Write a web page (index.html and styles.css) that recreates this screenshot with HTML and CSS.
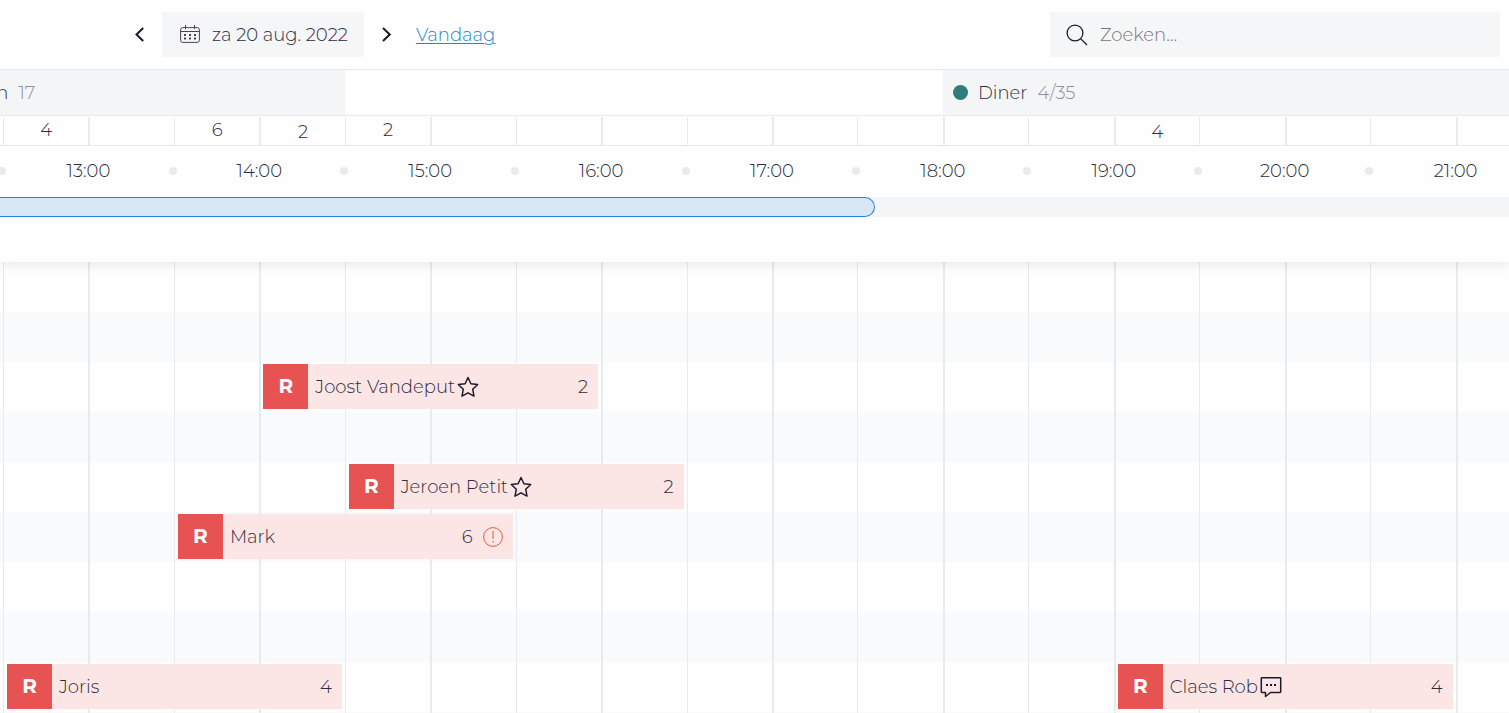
FILE: index.html
```html
<!DOCTYPE html>
<html lang="nl">
<head>
<meta charset="utf-8">
<title>Reservaties</title>
<meta name="viewport" content="width=device-width, initial-scale=1">
<link rel="stylesheet" href="styles.css">
</head>
<body>
<header class="header">
  <div class="topbar">
    <nav class="date-nav">
      <button class="arrow" type="button" aria-label="Vorige dag"><svg width="10" height="16" viewBox="0 0 10 16"><path d="M8.200 1 1.500 7.500l6.700 6.500"/></svg></button>
      <button class="date" type="button">
        <svg class="calendar" width="20" height="20" viewBox="0 0 20 20"><rect x=".6" y="2.600" width="18.800" height="14.800" rx="2.200"/><path d="M1 6.500h18M5.500 0v4M14.500 0v4"/><path class="days" d="M4 10h2M9 10h2M14 10h2M4 13.500h2M9 13.500h2M14 13.500h2"/></svg>
        <span class="label">za 20 aug. 2022</span>
      </button>
      <button class="arrow" type="button" aria-label="Volgende dag"><svg width="10" height="16" viewBox="0 0 10 16"><path d="M2 1l6.700 6.500L2 14"/></svg></button>
      <a class="today label" href="#">Vandaag</a>
    </nav>
    <label class="search">
      <svg width="22" height="22" viewBox="0 0 22 22"><circle cx="9" cy="9" r="7.900"/><path d="m14.600 14.600 6.400 6.400"/></svg>
      <input class="label" type="search" placeholder="Zoeken..." aria-label="Zoeken">
    </label>
  </div>

  <div class="strip sections">
    <div class="timeline">
      <div class="section lunch"><span class="label">Lunch</span><span class="label total">17</span></div>
      <div class="section diner"><i class="dot"></i><span class="label">Diner</span><span class="label total">4/35</span></div>
    </div>
  </div>

  <div class="strip counts">
    <div class="timeline ticks">
      <span>4</span><span></span><span>6</span><span>2</span><span>2</span><span></span><span></span><span></span><span></span><span></span><span></span><span></span><span></span><span>4</span><span></span><span></span><span></span><span></span>
    </div>
  </div>

  <div class="strip hours">
    <div class="timeline">
      <div class="hour"><i></i><span>13:00</span></div>
      <div class="hour"><i></i><span>14:00</span></div>
      <div class="hour"><i></i><span>15:00</span></div>
      <div class="hour"><i></i><span>16:00</span></div>
      <div class="hour"><i></i><span>17:00</span></div>
      <div class="hour"><i></i><span>18:00</span></div>
      <div class="hour"><i></i><span>19:00</span></div>
      <div class="hour"><i></i><span>20:00</span></div>
      <div class="hour"><i></i><span>21:00</span></div>
    </div>
  </div>

  <div class="track"><div class="elapsed"></div></div>
</header>

<main class="board">
  <div class="timeline ticks">
    <span></span><span></span><span></span><span></span><span></span><span></span><span></span><span></span><span></span><span></span><span></span><span></span><span></span><span></span><span></span><span></span><span></span><span></span>
  </div>
  <div class="lanes">
    <div class="timeline"></div>
    <div class="timeline"></div>
    <div class="timeline">
      <article class="booking at-1400"><b>R</b><span class="label">Joost Vandeput</span>
        <svg class="icon" width="22" height="22" viewBox="0 0 22 22"><path d="m11 1.500 2.900 6.200 6.800.8-5 4.700 1.300 6.900-6-3.300-6 3.300 1.300-6.900-5-4.700 6.800-.8z"/></svg>
        <span class="label guests">2</span></article>
    </div>
    <div class="timeline"></div>
    <div class="timeline">
      <article class="booking at-1430"><b>R</b><span class="label">Jeroen Petit</span>
        <svg class="icon" width="22" height="22" viewBox="0 0 22 22"><path d="m11 1.500 2.900 6.200 6.800.8-5 4.700 1.300 6.900-6-3.300-6 3.300 1.300-6.900-5-4.700 6.800-.8z"/></svg>
        <span class="label guests">2</span></article>
    </div>
    <div class="timeline">
      <article class="booking at-1330"><b>R</b><span class="label">Mark</span><span class="label guests">6</span>
        <svg class="alert" width="20" height="20" viewBox="0 0 20 20"><circle cx="10" cy="10" r="9.400"/><path d="M10 4v8M10 14v1.700"/></svg></article>
    </div>
    <div class="timeline"></div>
    <div class="timeline"></div>
    <div class="timeline">
      <article class="booking at-1230"><b>R</b><span class="label">Joris</span><span class="label guests">4</span></article>
      <article class="booking at-1900"><b>R</b><span class="label">Claes Rob</span>
        <svg class="icon" width="22" height="22" viewBox="0 0 22 22"><path d="M2 1.700h18q.7 0 .7.700v13.400q0 .7-.7.700h-9.500L5.500 20.500v-4H2q-.7 0-.7-.7V2.400q0-.7.700-.7z"/><path class="dots" d="M6 9h2M10 9h2M14 9h2"/></svg>
        <span class="label guests">4</span></article>
    </div>
  </div>
</main>
</body>
</html>
```
FILE: styles.css
```css
* { box-sizing: border-box; }

:root {
  --ink: #2b2d42;
  --line: #e8ebee;
  --panel: #f4f5f7;
  --paper: #fefefe;
  --blue: #2185d8;
}

body {
  margin: 0;
  min-height: 100vh;
  display: flex;
  flex-direction: column;
  overflow: hidden;
  background: var(--paper);
  color: var(--ink);
  font: 300 18px/24px Montserrat, Inter, sans-serif;
}

button, input { font: inherit; color: inherit; border: 0; background: none; padding: 0; }
button { cursor: pointer; }
svg { display: block; flex: none; fill: none; stroke: #1c1a2c; }
.label { padding: 1px 0 0; }

/* Header */
.header {
  position: relative;
  z-index: 1;
  padding-bottom: 45px;
  background: var(--paper);
  box-shadow: 0 2px 12px rgba(0, 0, 0, .1);
}

.topbar {
  display: flex;
  justify-content: space-between;
  padding: 12px 9px 12px 117px;
}

.date-nav { display: flex; align-items: center; }

.arrow {
  display: grid;
  place-items: center;
  width: 45px;
  height: 45px;
}
.arrow svg { stroke-width: 2; }

.date {
  display: flex;
  align-items: center;
  gap: 12px;
  height: 45px;
  padding: 0 16px 0 18px;
  background: #f4f6f8;
}
.calendar { stroke: #4a4254; }
.calendar .days { stroke-width: 2; }

.today {
  margin-left: 7px;
  color: var(--blue);
  text-decoration-thickness: 1px;
  text-underline-offset: 2px;
}

.search {
  display: flex;
  align-items: center;
  gap: 12px;
  width: 450px;
  height: 45px;
  padding: 0 16px;
  background: #f4f6f8;
}
.search svg { stroke-width: 1.300; }
.search input { flex: 1; min-width: 0; outline: 0; }
.search input::placeholder { color: #777; opacity: 1; }

/* Time columns: one per half hour */
.timeline {
  display: grid;
  grid-template-columns: repeat(18, 1fr);
  width: calc(100% + 29px);
  margin-left: 3px;
}

.strip { overflow: hidden; border-top: 1px solid var(--line); }

.ticks span { border-left: 1px solid var(--line); text-align: center; }
.ticks span:nth-child(even) { border-left-width: 2px; }

.section {
  display: flex;
  align-items: center;
  gap: 10px;
  height: 45px;
  background: var(--panel);
}
.lunch { grid-column: 1 / 5; margin-left: -51px; }
.diner { grid-column: 12 / -1; padding-left: 10px; }
.dot { width: 15px; height: 15px; border-radius: 50%; background: #2e7d78; }
.total { color: #8f8f95; }

.counts { padding-top: 1px; }
.counts span { height: 28px; line-height: 27px; }
.counts span:nth-child(even) { line-height: 31px; }

.hours { padding-bottom: 1px; }
.hour { grid-column: span 2; display: flex; align-items: center; height: 50px; }
.hour i {
  width: 8px;
  height: 8px;
  margin: 0 -3px 0 -5px;
  border-radius: 50%;
  background: var(--line);
}
.hour span { flex: 1; text-align: center; }

.track { height: 20px; background: var(--panel); }
.elapsed {
  width: 58%;
  height: 100%;
  border: 1px solid var(--blue);
  border-left: 0;
  border-radius: 0 10px 10px 0;
  background: #d9e7f4;
}

/* Board */
.board {
  flex: 1;
  display: grid;
  overflow: hidden;
  background: repeating-linear-gradient(var(--paper) 0 50px, #f8fafc 50px 100px);
}
.board > * { grid-area: 1 / 1; }
.lanes .timeline { height: 50px; padding: 2px 0 3px; }

.booking {
  display: flex;
  align-items: center;
  height: 45px;
  margin: 0 3px 0 4px;
  padding-right: 10px;
  background: #fce6e5;
}
.booking b {
  align-self: stretch;
  width: 45px;
  margin-right: 7px;
  background: #e75353;
  color: #fff;
  font-size: 20px;
  font-weight: 700;
  line-height: 45px;
  text-align: center;
}
.icon { margin-left: 2px; stroke-width: 1.500; stroke-linejoin: round; }
.dots { stroke-width: 2; }
.guests { margin-left: auto; }
.alert { margin-left: 10px; stroke: #e2573f; }

.at-1230 { grid-column: 1 / span 4; }
.at-1330 { grid-column: 3 / span 4; }
.at-1400 { grid-column: 4 / span 4; }
.at-1430 { grid-column: 5 / span 4; }
.at-1900 { grid-column: 14 / span 4; }
```
